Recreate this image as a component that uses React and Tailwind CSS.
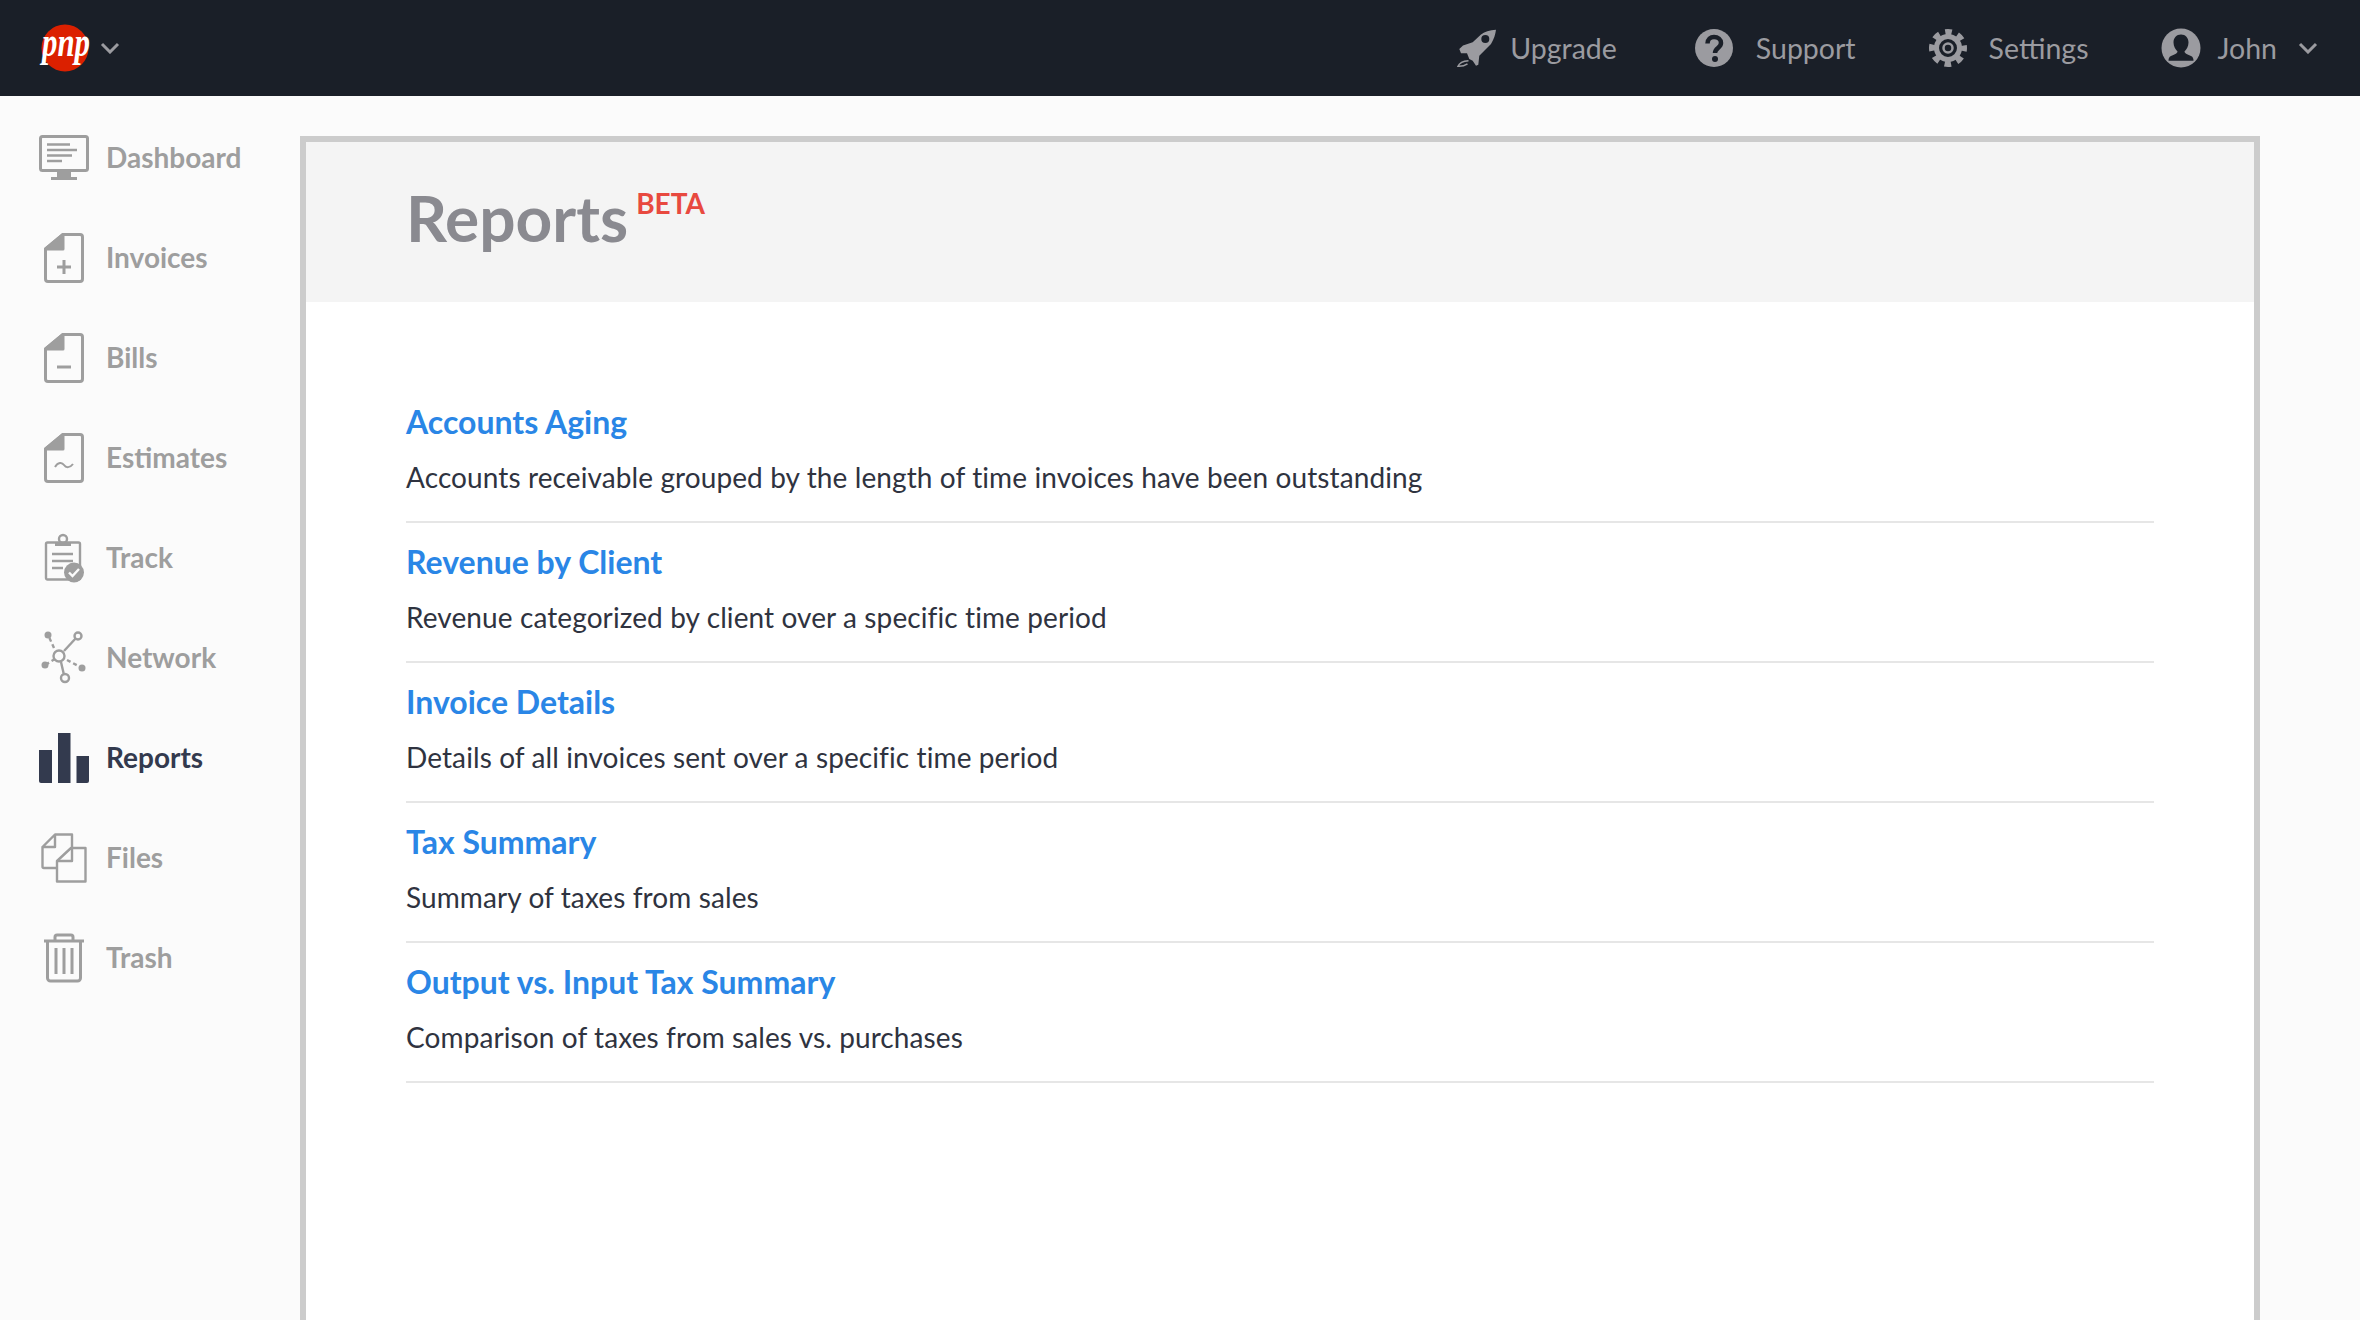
import React from "react";

const Doc = ({ children }) => (
  <svg width="40" height="50" viewBox="0 0 40 50" fill="none" stroke="currentColor" strokeWidth="3">
    <path d="M19 1.500H36a2.500 2.500 0 0 1 2.500 2.500V46a2.500 2.500 0 0 1-2.500 2.500H4A2.500 2.500 0 0 1 1.500 46V16Z" strokeLinejoin="round" />
    <path d="M1.500 16L19 1.500V16Z" fill="currentColor" strokeLinejoin="round" />
    {children}
  </svg>
);

const DashboardIcon = () => (
  <svg width="50" height="46" viewBox="0 0 50 46" fill="none" stroke="currentColor">
    <rect x="1.500" y="1.500" width="47" height="34" rx="2" strokeWidth="3" />
    <path d="M8 9.500H31M8 15H38M8 20.500H33M8 26H23" strokeWidth="2.400" />
    <path d="M18 36H32V42H18Z" fill="currentColor" stroke="none" />
    <path d="M12 43.500H38" strokeWidth="3" />
  </svg>
);

const TrackIcon = () => (
  <svg width="40" height="50" viewBox="0 0 40 50" fill="none" stroke="currentColor">
    <rect x="2" y="9.500" width="34" height="37" rx="1.500" strokeWidth="2.400" />
    <circle cx="19" cy="6" r="4" strokeWidth="2.400" />
    <path d="M11 9H27V13H11Z" fill="currentColor" stroke="none" />
    <path d="M8 21H29M8 28H29M8 35H19" strokeWidth="2.400" />
    <circle cx="30" cy="39.500" r="10" fill="currentColor" stroke="none" />
    <path d="M25 39.500L28.500 43L35 36" stroke="#fbfbfb" strokeWidth="2.400" />
  </svg>
);

const NetworkIcon = () => (
  <svg width="46" height="54" viewBox="0 0 46 54" fill="none" stroke="currentColor" strokeWidth="2.400">
    <path d="M13 17L8 6" strokeDasharray="4 3" />
    <path d="M23 20L35 7" />
    <path d="M26 29L41 37" strokeDasharray="4 3" />
    <path d="M20 31L23 44" />
    <path d="M14 28L4 34" strokeDasharray="4 3" />
    <circle cx="18" cy="25" r="5.500" />
    <circle cx="7" cy="4" r="3.500" fill="currentColor" stroke="none" />
    <circle cx="37" cy="5" r="3.500" />
    <circle cx="41" cy="37" r="3.500" fill="currentColor" stroke="none" />
    <circle cx="24" cy="47" r="4" />
    <circle cx="4" cy="34" r="3.500" fill="currentColor" stroke="none" />
  </svg>
);

const ReportsIcon = () => (
  <svg width="50" height="50" viewBox="0 0 50 50" fill="currentColor">
    <path d="M0 17H13V50H2a2 2 0 0 1-2-2Z" />
    <rect x="19" y="0" width="12.500" height="50" />
    <path d="M37.500 23H50V48a2 2 0 0 1-2 2H37.500Z" />
  </svg>
);

const FilesIcon = () => (
  <svg width="46" height="50" viewBox="0 0 46 50" fill="none" stroke="currentColor" strokeWidth="2.400" strokeLinejoin="round">
    <path d="M1.500 14L14 1.500H31V16M15 35H3a1.500 1.500 0 0 1-1.500-1.500V14H14V1.500" />
    <path d="M16 28L30 15H44.500V48.500H16Z" />
    <path d="M16 28H31V15" />
  </svg>
);

const TrashIcon = () => (
  <svg width="42" height="50" viewBox="0 0 42 50" fill="none" stroke="currentColor" strokeWidth="3">
    <path d="M1 8H41" />
    <path d="M12 8V4a2 2 0 0 1 2-2H28a2 2 0 0 1 2 2V8" />
    <path d="M4.500 8V45a3 3 0 0 0 3 3H34.500a3 3 0 0 0 3-3V8" />
    <path d="M13 15V41M21 15V41M29 15V41" />
  </svg>
);

const RocketIcon = () => (
  <svg width="40" height="40" viewBox="0 0 40 40" fill="currentColor">
    <path d="M39 1.700C33 2 27 4 24 6.500L15.700 14.300L6 17.500L2.300 21L4 25.300H10L12.300 31L15.700 32.700L19 37.700L21.300 36.700L22.300 27.700L34 16C37 11 38.500 6 39 1.700Z" />
    <circle cx="28.300" cy="11" r="4" fill="#1a1f28" />
    <path d="M11.500 32.700C7 33 2.500 34.500 1 38.300C4.500 38.500 8 37.500 10.500 35.800" fill="none" stroke="currentColor" strokeWidth="1.500" />
  </svg>
);

const QuestionIcon = () => (
  <svg width="40" height="40" viewBox="0 0 40 40">
    <circle cx="20" cy="20" r="19" fill="currentColor" />
    <path d="M13.500 15.500C13.500 11 16.500 9 20 9C24 9 27 11.500 27 15C27 20 21 20 21 25" fill="none" stroke="#1a1f28" strokeWidth="4.500" />
    <circle cx="21" cy="31" r="3" fill="#1a1f28" />
  </svg>
);

const GearIcon = () => (
  <svg width="40" height="40" viewBox="0 0 40 40" fill="none" stroke="currentColor">
    <circle cx="20" cy="20" r="16" strokeWidth="6" strokeDasharray="6.570 6" strokeDashoffset="3.280" />
    <circle cx="20" cy="20" r="11.500" strokeWidth="5" />
    <circle cx="20" cy="20" r="4.500" strokeWidth="2.500" />
  </svg>
);

const UserIcon = () => (
  <svg width="40" height="40" viewBox="0 0 40 40">
    <circle cx="20" cy="20" r="19.500" fill="currentColor" />
    <path d="M20 6.500C15.500 6.500 12.500 10 12.500 14.500C12.500 18.500 14.500 21.500 16.500 23.500C16.500 25.500 13 26.500 10 28C8 29 7.500 30.500 7.500 32.700H32.500C32.500 30.500 32 29 30 28C27 26.500 23.500 25.500 23.500 23.500C25.500 21.500 27.500 18.500 27.500 14.500C27.500 10 24.500 6.500 20 6.500Z" fill="#1a1f28" />
  </svg>
);

const Chevron = () => (
  <svg width="20" height="12" viewBox="0 0 20 12" fill="none" stroke="currentColor" strokeWidth="3">
    <path d="M2 2L10 10L18 2" />
  </svg>
);

const navItems = [
  { label: "Dashboard", icon: <DashboardIcon /> },
  { label: "Invoices", icon: <Doc><path d="M20 27V41M13 34H27" /></Doc> },
  { label: "Bills", icon: <Doc><path d="M13 34H27" /></Doc> },
  { label: "Estimates", icon: <Doc><path d="M11 34C14 29 18 29 20 32C22 35 26 35 29 31" strokeWidth="2" /></Doc> },
  { label: "Track", icon: <TrackIcon /> },
  { label: "Network", icon: <NetworkIcon /> },
  { label: "Reports", icon: <ReportsIcon />, active: true },
  { label: "Files", icon: <FilesIcon /> },
  { label: "Trash", icon: <TrashIcon /> },
];

const reports = [
  { title: "Accounts Aging", desc: "Accounts receivable grouped by the length of time invoices have been outstanding" },
  { title: "Revenue by Client", desc: "Revenue categorized by client over a specific time period" },
  { title: "Invoice Details", desc: "Details of all invoices sent over a specific time period" },
  { title: "Tax Summary", desc: "Summary of taxes from sales" },
  { title: "Output vs. Input Tax Summary", desc: "Comparison of taxes from sales vs. purchases" },
];

const App = () => {
  return (
    <div className="h-screen overflow-hidden flex flex-col bg-[#fbfbfb] font-['Lato',sans-serif]">
      <header className="h-[96px] shrink-0 bg-[#1a1f28] flex items-center justify-between text-[#9b9ba0] text-[28.5px]">
        <div className="flex items-center pl-[41px] gap-[11px]">
          <svg width="48" height="48" viewBox="0 0 48 48" className="overflow-visible">
            <circle cx="24" cy="24" r="23.500" fill="#db2000" />
            <text x="25" y="32" textAnchor="middle" fill="#fff" fontFamily="Liberation Serif" fontStyle="italic" fontWeight="700" fontSize="42" textLength="48" lengthAdjust="spacingAndGlyphs">pnp</text>
          </svg>
          <Chevron />
        </div>
        <div className="flex items-center pr-[42px]">
          <div className="flex items-center gap-[13px] mr-[77px]"><RocketIcon /><span>Upgrade</span></div>
          <div className="flex items-center gap-[22px] mr-[72px]"><QuestionIcon /><span>Support</span></div>
          <div className="flex items-center gap-[21px] mr-[72px]"><GearIcon /><span>Settings</span></div>
          <div className="flex items-center gap-[17px]"><UserIcon /><span className="mr-[4px]">John</span><Chevron /></div>
        </div>
      </header>

      <div className="flex-1 flex min-h-0">
        <nav className="w-[300px] shrink-0 pt-[12px]">
          {navItems.map((item) => (
            <div key={item.label} className={`h-[100px] flex items-center font-bold text-[28px] pl-[39px] ${item.active ? "text-[#333a4e]" : "text-[#9e9e9e]"}`}>
              <span className="w-[50px] flex justify-center shrink-0 mr-[17px]">{item.icon}</span>
              <span className="mb-[2px]">{item.label}</span>
            </div>
          ))}
        </nav>

        <main className="w-[1960px] mt-[40px] border-[6px] border-b-0 border-[#cccccc] bg-white">
          <div className="h-[160px] bg-[#f4f4f4] pl-[100px] pt-[36px] flex items-start">
            <h1 className="text-[64px] leading-[80px] font-bold text-[#8a8a90]">Reports</h1>
            <span className="text-[28px] leading-[32px] font-bold text-[#e8493f] ml-[8px] mt-[9px]">BETA</span>
          </div>
          <div className="px-[100px] pt-[81px]">
            {reports.map((r) => (
              <div key={r.title} className="h-[140px] border-b-2 border-[#e6e6e6] flex flex-col">
                <a className="text-[32px] leading-[40px] font-bold text-[#2a86e6] mt-[19px]">{r.title}</a>
                <p className="text-[28px] leading-[36px] tracking-[0.1px] text-[#2f3340] mt-[17px]">{r.desc}</p>
              </div>
            ))}
          </div>
        </main>
      </div>
    </div>
  );
};

export default App;
